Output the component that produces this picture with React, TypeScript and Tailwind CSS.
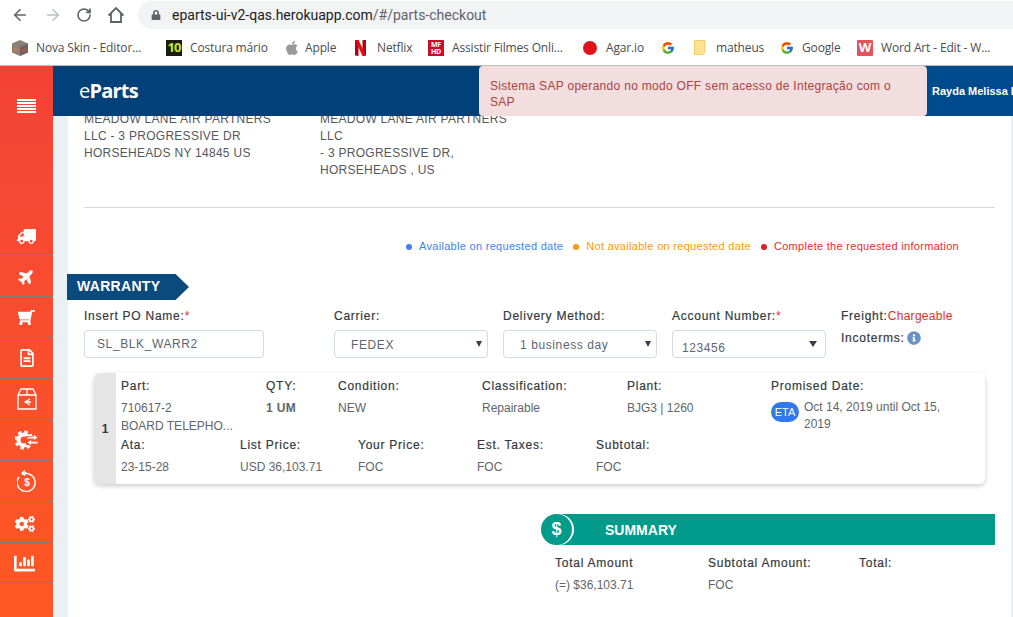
import type { ReactNode } from "react";
import { ArrowLeft, ArrowRight, RotateCw } from "lucide-react";
import { FaApple, FaChartBar, FaCogs, FaInfoCircle, FaLock, FaPlane, FaRegFileAlt, FaShoppingCart, FaTruck } from "react-icons/fa";
import { FcGoogle } from "react-icons/fc";

function HomeIcon() {
  return (
    <svg width="18" height="18" viewBox="0 0 18 18" fill="none" stroke="#5f6368" strokeWidth="1.8">
      <path d="M1.5 9.5 9 2l7.5 7.5M4 7.5V16h10V7.5" />
    </svg>
  );
}

function MenuBars() {
  return (
    <div className="flex w-[19px] flex-col gap-px">
      {[0, 1, 2, 3, 4].map((i) => (
        <div key={i} className="h-[2px] bg-white" />
      ))}
    </div>
  );
}

function BoxReturnIcon() {
  return (
    <svg width="20" height="22" viewBox="0 0 20 22" fill="none" stroke="white" strokeWidth="1.3">
      <path d="M1 7 4 1h12l3 6v14H1ZM1 7h18M10 1v6M13 11l-5 3 5 3M8 14h6" />
    </svg>
  );
}

function GearSwapIcon() {
  return (
    <svg width="23" height="20" viewBox="0 0 23 20" fill="none">
      <circle cx="9" cy="10" r="5.500" stroke="white" strokeWidth="4" />
      <circle cx="9" cy="10" r="8.200" stroke="white" strokeWidth="2.600" strokeDasharray="3.400 3.050" />
      <rect x="11" y="6" width="12" height="9" fill="#ff5330" />
      <path d="M12.500 6.700H19V5l3.500 2.600L19 10V8.400h-6.500ZM22.500 11.700H16V10l-3.500 2.600L16 15v-1.600h6.500Z" fill="white" />
    </svg>
  );
}

function DollarReturnIcon() {
  return (
    <svg width="20" height="22" viewBox="0 0 20 22" fill="none" stroke="white" strokeWidth="1.4">
      <path d="M5 4.500A9 9 0 1 1 2 7M10 3H5.500M8 .5 5.200 3 8 5.500" />
      <text x="10" y="16" textAnchor="middle" fontSize="10" fontWeight="700" fill="white" stroke="none" fontFamily="Liberation Sans, sans-serif">$</text>
    </svg>
  );
}

function NetflixIcon() {
  return (
    <svg width="11" height="16" viewBox="0 0 11 16">
      <path d="M0 0h3.500v16L0 15.500Z" fill="#b1060f" />
      <path d="M7.500 0H11v15.500L7.500 16Z" fill="#b1060f" />
      <path d="M0 0h3.500l7.500 15.500L7.500 16Z" fill="#e50914" />
    </svg>
  );
}

function NoteIcon() {
  return (
    <svg width="12" height="15" viewBox="0 0 12 15">
      <path d="M.5.5h10.500v12l-2 2H.5Z" fill="#fde293" stroke="#f3cf63" />
    </svg>
  );
}

function SkinIcon() {
  return (
    <svg width="16" height="16" viewBox="0 0 16 16">
      <path d="M8 0l8 3.500v9L8 16l-8-3.500v-9Z" fill="#8a8178" />
      <path d="M8 7l8-3.500v9L8 16Z" fill="#6d665f" />
      <path d="M1.500 7l4 2v3l-4-1.500Z" fill="#c9775a" />
      <path d="M10 10l4-2v2.500l-4 2Z" fill="#c0503c" />
    </svg>
  );
}

const bookmarks: { label: string; icon: ReactNode; boxClass: string; gapClass: string }[] = [
  { label: "Nova Skin - Editor...", icon: <SkinIcon />, boxClass: "w-[154px]", gapClass: "w-6" },
  {
    label: "Costura mário",
    icon: <div className="flex h-4 w-4 items-center justify-center bg-[#1c1c10] text-[13px] font-bold leading-none tracking-[-1px] text-[#c6e82e]">10</div>,
    boxClass: "w-[118px]",
    gapClass: "w-6",
  },
  { label: "Apple", icon: <FaApple size={16} color="#9a9a9a" />, boxClass: "w-[71px]", gapClass: "w-[21px]" },
  { label: "Netflix", icon: <NetflixIcon />, boxClass: "w-[73px]", gapClass: "w-[22px]" },
  {
    label: "Assistir Filmes Onli...",
    icon: (
      <div className="flex h-4 w-4 flex-col items-center justify-center bg-[#c8102e] text-[7px] font-bold leading-[7px] text-white">
        <span>MF</span>
        <span>HD</span>
      </div>
    ),
    boxClass: "w-[155px]",
    gapClass: "w-6",
  },
  { label: "Agar.io", icon: <div className="h-[14px] w-[14px] rounded-full bg-[#e0131b]" />, boxClass: "w-[78px]", gapClass: "w-[23px]" },
  { label: "", icon: <FcGoogle size={14} />, boxClass: "w-[33px]", gapClass: "w-[14px]" },
  { label: "matheus", icon: <NoteIcon />, boxClass: "w-[86px]", gapClass: "w-[22px]" },
  { label: "Google", icon: <FcGoogle size={14} />, boxClass: "w-[77px]", gapClass: "w-[22px]" },
  {
    label: "Word Art - Edit - W...",
    icon: <div className="flex h-4 w-4 items-center justify-center rounded-[1px] bg-[#e8505b] text-[13px] font-bold leading-none text-white">W</div>,
    boxClass: "w-[150px]",
    gapClass: "w-6",
  },
];

function BrowserChrome() {
  return (
    <div className="h-[66px] shrink-0 border-b border-[#bdbdbd] bg-white">
      <div className="flex h-[30px] items-center">
        <div className="flex w-[138px] shrink-0 items-center pl-[11px]">
          <ArrowLeft size={18} color="#5f6368" strokeWidth={2.2} />
          <ArrowRight size={18} color="#bdc1c6" strokeWidth={2.2} className="ml-[15px]" />
          <RotateCw size={16} color="#5f6368" strokeWidth={2.4} className="ml-[14px]" />
          <div className="ml-[15px]"><HomeIcon /></div>
        </div>
        <div className="flex h-[28px] flex-1 items-center rounded-l-full bg-[#f1f3f4] pl-[13px] font-['Roboto',sans-serif] text-[14px]">
          <FaLock size={10} color="#5f6368" />
          <span className="ml-[11px] text-[#202124]">eparts-ui-v2-qas.herokuapp.com</span>
          <span className="text-[#5f6368]">/#/parts-checkout</span>
        </div>
      </div>
      <div className="flex h-[35px] items-center pl-3 font-['Open_Sans',sans-serif] text-[12px] tracking-[-0.15px] text-[#4a4d51]">
        {bookmarks.map((b, i) => (
          <div key={i} className={`flex shrink-0 items-center ${b.boxClass}`}>
            <div className={`flex items-center ${b.gapClass}`}>{b.icon}</div>
            <span className="whitespace-nowrap">{b.label}</span>
          </div>
        ))}
      </div>
    </div>
  );
}

const sideItems: ReactNode[] = [
  <FaTruck size={19} className="mt-[3px] -scale-x-100" />,
  <FaPlane size={17} className="-rotate-45" />,
  <FaShoppingCart size={17} className="-scale-x-100" />,
  <FaRegFileAlt size={18} />,
  <BoxReturnIcon />,
  <GearSwapIcon />,
  <DollarReturnIcon />,
  <FaCogs size={20} className="mt-[3px] -translate-x-[2px]" />,
  <FaChartBar size={21} className="-translate-x-[2px]" />,
];

function Sidebar() {
  return (
    <aside className="flex w-[53px] shrink-0 flex-col bg-gradient-to-b from-[#f44336] to-[#ff5722] text-white">
      <div className="flex h-[149px] shrink-0 justify-center pt-[33px]">
        <MenuBars />
      </div>
      {sideItems.map((icon, i) => (
        <div key={i} className="flex h-[41px] shrink-0 items-center justify-center border-b border-[#78808a]">
          {icon}
        </div>
      ))}
    </aside>
  );
}

function Label({ children, className = "" }: { children: ReactNode; className?: string }) {
  return <div className={`text-[12px] leading-[14px] tracking-[0.75px] text-[#343a40] [-webkit-text-stroke:0.2px_#343a40] ${className}`}>{children}</div>;
}

function Val({ children, className = "" }: { children: ReactNode; className?: string }) {
  return <div className={`text-[12px] leading-[14px] text-[#60656b] ${className}`}>{children}</div>;
}

function Field({ children, className }: { children: ReactNode; className: string }) {
  return (
    <div className={`relative flex h-[28px] items-center rounded border border-[#d3dbe6] bg-white text-[12px] tracking-[0.6px] text-[#5c6672] ${className}`}>
      {children}
    </div>
  );
}

const Caret = ({ className = "" }: { className?: string }) => (
  <div className={`ml-auto h-0 w-0 border-x-[3.500px] border-t-[6px] border-x-transparent border-t-[#35404e] ${className}`} />
);

function OrderCard() {
  return (
    <div className="ml-[26px] flex h-[111px] w-[891px] rounded-[6px] bg-white shadow-[0_2px_5px_rgba(0,0,0,0.2)]">
      <div className="flex w-[22px] shrink-0 items-center justify-center rounded-l-[6px] bg-[#e5e5e5] text-[12px] font-bold text-[#343a40]">1</div>
      <div className="flex-1 pl-[5px] pt-[6px]">
        <div className="flex h-[59px]">
          <div className="w-[145px]">
            <Label>Part:</Label>
            <Val className="mt-2">710617-2</Val>
            <Val className="mt-1">BOARD TELEPHO...</Val>
          </div>
          <div className="w-[72px]">
            <Label>QTY:</Label>
            <Val className="mt-2 font-bold tracking-[0.4px] text-[#454b52]">1 UM</Val>
          </div>
          <div className="w-[144px]">
            <Label>Condition:</Label>
            <Val className="mt-2">NEW</Val>
          </div>
          <div className="w-[145px]">
            <Label>Classification:</Label>
            <Val className="mt-2">Repairable</Val>
          </div>
          <div className="w-[144px]">
            <Label>Plant:</Label>
            <Val className="mt-2">BJG3 | 1260</Val>
          </div>
          <div className="w-[190px]">
            <Label>Promised Date:</Label>
            <div className="mt-[6px] flex items-start gap-[5px]">
              <div className="mt-[3px] flex h-5 w-[28px] shrink-0 items-center justify-center rounded-full bg-[#2f78ed] text-[11px] text-white">ETA</div>
              <Val className="leading-[17px]">Oct 14, 2019 until Oct 15, 2019</Val>
            </div>
          </div>
        </div>
        <div className="flex">
          <div className="w-[119px]">
            <Label>Ata:</Label>
            <Val className="mt-2">23-15-28</Val>
          </div>
          <div className="w-[118px]">
            <Label>List Price:</Label>
            <Val className="mt-2">USD 36,103.71</Val>
          </div>
          <div className="w-[119px]">
            <Label>Your Price:</Label>
            <Val className="mt-2">FOC</Val>
          </div>
          <div className="w-[119px]">
            <Label>Est. Taxes:</Label>
            <Val className="mt-2">FOC</Val>
          </div>
          <div className="w-[119px]">
            <Label>Subtotal:</Label>
            <Val className="mt-2">FOC</Val>
          </div>
        </div>
      </div>
    </div>
  );
}

function Summary() {
  return (
    <div className="ml-[473px] mt-[30px] w-[454px]">
      <div className="relative ml-[16px] flex h-[31px] items-center bg-[#009b8a] pl-[48px] text-[14px] font-bold text-white">
        <div className="absolute -left-[16px] top-0 flex h-[31px] w-[31px] items-center justify-center rounded-full bg-[#009b8a] text-[18px] shadow-[2px_0_0_white]">$</div>
        <span className="mt-px">SUMMARY</span>
      </div>
      <div className="mt-[11px] flex pl-[14px]">
        <div className="w-[153px]">
          <Label>Total Amount</Label>
          <Val className="mt-2">(=) $36,103.71</Val>
        </div>
        <div className="w-[151px]">
          <Label>Subtotal Amount:</Label>
          <Val className="mt-2">FOC</Val>
        </div>
        <Label>Total:</Label>
      </div>
    </div>
  );
}

function Content() {
  return (
    <div className="flex-1 overflow-hidden bg-[#ebf0f5] pl-[15px] pr-[2px]">
      <div className="h-[520px] bg-white">
        <div className="-mt-[5px] flex pl-4 text-[12px] leading-[17px] tracking-[0.28px] text-[#55595e]">
          <div className="w-[236px]">
            <div>MEADOW LANE AIR PARTNERS</div>
            <div>LLC - 3 PROGRESSIVE DR</div>
            <div>HORSEHEADS NY 14845 US</div>
          </div>
          <div className="w-[200px]">
            <div>MEADOW LANE AIR PARTNERS</div>
            <div>LLC</div>
            <div>- 3 PROGRESSIVE DR,</div>
            <div>HORSEHEADS , US</div>
          </div>
        </div>
        <div className="ml-4 mr-4 mt-[28px] border-t border-[#d8d8d8]" />
        <div className="mr-[52px] mt-[32px] flex items-center justify-end gap-[10px] text-[11px] leading-[13px] tracking-[0.3px]">
          <span className="flex items-center gap-[7px] text-[#3b82f6]"><i className="h-[6px] w-[6px] rounded-full bg-[#3b82f6]" />Available on requested date</span>
          <span className="flex items-center gap-[7px] text-[#ff9800]"><i className="h-[6px] w-[6px] rounded-full bg-[#ff9800]" />Not available on requested date</span>
          <span className="flex items-center gap-[7px] text-[#e52b2b]"><i className="h-[6px] w-[6px] rounded-full bg-[#e01f1f]" />Complete the requested information</span>
        </div>
        <div className="-ml-px mt-[21px] flex h-[26px] w-[122px] items-center bg-[#0b4a7d] pb-px pl-[10px] text-[14px] font-bold tracking-[0.3px] text-white [clip-path:polygon(0_0,89%_0,100%_50%,89%_100%,0_100%)]">
          WARRANTY
        </div>
        <div className="mt-[9px] flex h-[64px] pl-4">
          <div className="w-[250px]">
            <Label>Insert PO Name:<span className="text-[#e52b2b] [-webkit-text-stroke:0]">*</span></Label>
            <Field className="mt-[7px] w-[180px] pl-3">SL_BLK_WARR2</Field>
          </div>
          <div className="w-[169px]">
            <Label>Carrier:</Label>
            <Field className="mt-[7px] w-[154px] pl-4 pr-[5px]"><span className="mt-px">FEDEX</span><Caret /></Field>
          </div>
          <div className="w-[169px]">
            <Label>Delivery Method:</Label>
            <Field className="mt-[7px] w-[154px] pl-4 pr-[5px]"><span className="mt-px">1 business day</span><Caret /></Field>
          </div>
          <div className="w-[169px]">
            <Label>Account Number:<span className="text-[#e52b2b] [-webkit-text-stroke:0]">*</span></Label>
            <Field className="mt-[7px] w-[154px] pl-[9px] pr-[8px]"><span className="mt-[8px]">123456</span><Caret className="border-x-[4.500px] border-t-[4px]" /></Field>
          </div>
          <div>
            <Label>Freight:<span className="text-[#e52b2b] [-webkit-text-stroke:0] tracking-[0.3px]">Chargeable</span></Label>
            <Label className="mt-[8px] flex items-center gap-[2px]">Incoterms:<FaInfoCircle size={14} color="#6a93c4" /></Label>
          </div>
        </div>
        <OrderCard />
        <Summary />
      </div>
    </div>
  );
}

export default function App() {
  return (
    <div className="flex h-[617px] w-[1013px] flex-col overflow-hidden bg-white font-['Liberation_Sans',Arial,sans-serif]">
      <BrowserChrome />
      <div className="flex min-h-0 flex-1">
        <Sidebar />
        <div className="relative flex min-w-0 flex-1 flex-col">
          <header className="relative z-10 flex h-[50px] shrink-0 items-center justify-between bg-[#02407a] pl-[26px] text-white">
            <div className="font-['Open_Sans',sans-serif] text-[20px] font-bold tracking-[-0.8px]"><span className="font-normal">e</span>Parts</div>
            <div className="w-[86px] overflow-hidden whitespace-nowrap bg-[#004b8d] pl-[5px] text-[11px] font-bold leading-[50px]">Rayda Melissa Ribeiro</div>
          </header>
          <div className="absolute left-[426px] top-0 z-20 flex h-[50px] w-[448px] items-center rounded-[4px] bg-[#f2dede] pl-[11px] pr-6 pt-[5px] text-[12px] leading-[16px] tracking-[0.3px] text-[#a94442]">
            Sistema SAP operando no modo OFF sem acesso de Integração com o SAP
          </div>
          <Content />
        </div>
      </div>
    </div>
  );
}
